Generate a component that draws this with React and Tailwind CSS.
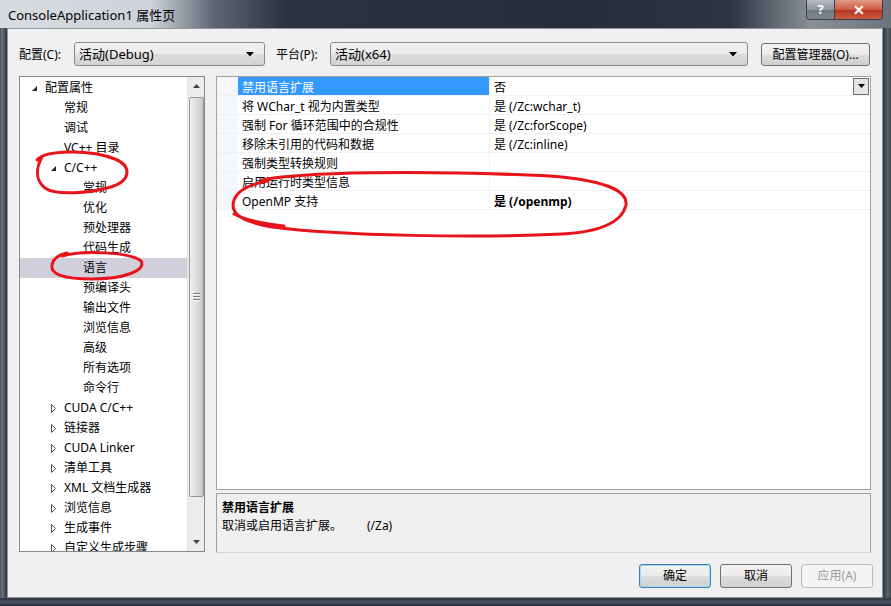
const font = "font-['Segoe_UI','Noto_Sans','Noto_Sans_CJK_SC',sans-serif]";

const treeItems = [
  { t: "配置属性", lvl: 0, arrow: "open" },
  { t: "常规", lvl: 1 },
  { t: "调试", lvl: 1 },
  { t: "VC++ 目录", lvl: 1 },
  { t: "C/C++", lvl: 1, arrow: "open" },
  { t: "常规", lvl: 2 },
  { t: "优化", lvl: 2 },
  { t: "预处理器", lvl: 2 },
  { t: "代码生成", lvl: 2 },
  { t: "语言", lvl: 2, sel: true },
  { t: "预编译头", lvl: 2 },
  { t: "输出文件", lvl: 2 },
  { t: "浏览信息", lvl: 2 },
  { t: "高级", lvl: 2 },
  { t: "所有选项", lvl: 2 },
  { t: "命令行", lvl: 2 },
  { t: "CUDA C/C++", lvl: 1, arrow: "closed" },
  { t: "链接器", lvl: 1, arrow: "closed" },
  { t: "CUDA Linker", lvl: 1, arrow: "closed" },
  { t: "清单工具", lvl: 1, arrow: "closed" },
  { t: "XML 文档生成器", lvl: 1, arrow: "closed" },
  { t: "浏览信息", lvl: 1, arrow: "closed" },
  { t: "生成事件", lvl: 1, arrow: "closed" },
  { t: "自定义生成步骤", lvl: 1, arrow: "closed" },
];

const props = [
  { name: "禁用语言扩展", value: "否", sel: true },
  { name: "将 WChar_t 视为内置类型", value: "是 (/Zc:wchar_t)" },
  { name: "强制 For 循环范围中的合规性", value: "是 (/Zc:forScope)" },
  { name: "移除未引用的代码和数据", value: "是 (/Zc:inline)" },
  { name: "强制类型转换规则", value: "" },
  { name: "启用运行时类型信息", value: "" },
  { name: "OpenMP 支持", value: "是 (/openmp)", bold: true },
];

function DownTri() {
  return (
    <svg width="8" height="5" viewBox="0 0 8 5">
      <path d="M0 0 H8 L4 4.5 Z" fill="#000" />
    </svg>
  );
}

function TreeArrow({ kind }) {
  if (kind === "open") {
    return (
      <svg width="7" height="7" viewBox="0 0 7 7">
        <path d="M6 1 V6 H1 Z" fill="#262626" />
      </svg>
    );
  }
  return (
    <svg width="7" height="9" viewBox="0 0 7 9">
      <path d="M1.5 0.5 L5.5 4.5 L1.5 8.5 Z" fill="#fff" stroke="#555" strokeWidth="1" />
    </svg>
  );
}

function Combo({ text, width }) {
  return (
    <div
      className={`${width} h-[24px] flex items-center justify-between pl-[4px] pr-[10px] pt-[1px] rounded-[3px] border border-[#8a8a8a] bg-[linear-gradient(#f3f3f3,#ebebeb_50%,#dddddd_51%,#d3d3d3)]`}
    >
      <span className="text-[13px] text-black">{text}</span>
      <DownTri />
    </div>
  );
}

function Button({ children, variant }) {
  const styles = {
    default: "border-[#3c7fb1] shadow-[inset_0_0_0_1px_#9fdcf7] text-black",
    normal: "border-[#707070] text-black",
    disabled: "border-[#b8bcc0] text-[#9a9a9a]",
  };
  const bg =
    variant === "disabled"
      ? "bg-[#f4f4f4]"
      : "bg-[linear-gradient(#f2f2f2,#ebebeb_50%,#dddddd_51%,#cfcfcf)]";
  return (
    <div
      className={`w-[72px] h-[24px] flex items-center justify-center rounded-[3px] border text-[12px] ${bg} ${styles[variant]}`}
    >
      {children}
    </div>
  );
}

function Tree() {
  return (
    <div className="w-[186px] h-[476px] border border-[#828790] bg-white flex overflow-hidden">
      <div className="flex-1 pt-[1px] overflow-hidden">
        {treeItems.map((it, i) => (
          <div
            key={i}
            className={`h-[20px] flex items-center ${it.sel ? "bg-[#cfd0dc]" : ""}`}
          >
            <div className="flex items-center" style={{ paddingLeft: 11 + it.lvl * 19 }}>
              <div className="w-[14px] flex items-center">
                {it.arrow && <TreeArrow kind={it.arrow} />}
              </div>
              <span className="text-[12px] text-black leading-none whitespace-nowrap">
                {it.t}
              </span>
            </div>
          </div>
        ))}
      </div>
      <div className="w-[17px] h-full bg-[#ececec] border-l border-[#e2e2e2] flex flex-col items-center">
        <div className="h-[18px] w-full flex items-center justify-center">
          <svg width="7" height="4" viewBox="0 0 7 4">
            <path d="M0 4 L3.5 0 L7 4 Z" fill="#404040" />
          </svg>
        </div>
        <div className="mt-[2px] w-[15px] h-[400px] rounded-[2px] border border-[#979797] bg-[linear-gradient(90deg,#f1f1f1,#dadada_55%,#c8c8c8)] flex items-center justify-center">
          <div className="flex flex-col gap-[1px]">
            <div className="w-[7px] h-[2px] bg-[#7a7a7a] border-b border-white" />
            <div className="w-[7px] h-[2px] bg-[#7a7a7a] border-b border-white" />
            <div className="w-[7px] h-[2px] bg-[#7a7a7a] border-b border-white" />
          </div>
        </div>
        <div className="flex-1" />
        <div className="h-[18px] w-full flex items-center justify-center">
          <svg width="7" height="4" viewBox="0 0 7 4">
            <path d="M0 0 H7 L3.5 4 Z" fill="#404040" />
          </svg>
        </div>
      </div>
    </div>
  );
}

function Grid() {
  return (
    <div className="h-[414px] border border-[#a0a0a0] bg-white">
      {props.map((p, i) => (
        <div key={i} className="h-[19px] flex border-b border-[#f0f0f0]">
          <div className="w-[21px] bg-[#f4f7fc]" />
          <div
            className={`w-[252px] flex items-center pl-[4px] pt-[3px] border-r border-[#f0f0f0] text-[12px] whitespace-nowrap ${
              p.sel ? "bg-[#3399ff] text-white" : "text-black"
            }`}
          >
            {p.name}
          </div>
          <div className="flex-1 flex items-center justify-between pl-[4px] text-[12px] text-black">
            <span className={`pt-[3px] ${p.bold ? "font-bold" : ""}`}>{p.value}</span>
            {p.sel && (
              <div className="w-[16px] h-[17px] mr-[1px] border border-[#707070] bg-[#e4e4e4] flex items-center justify-center">
                <svg width="7" height="4" viewBox="0 0 7 4">
                  <path d="M0 0 H7 L3.5 4 Z" fill="#000" />
                </svg>
              </div>
            )}
          </div>
        </div>
      ))}
    </div>
  );
}

function Marks() {
  return (
    <svg
      className="absolute inset-0 pointer-events-none"
      width="891"
      height="606"
      viewBox="0 0 891 606"
    >
      <g fill="none" stroke="#e8141c" strokeWidth="3" strokeLinecap="round">
        <path d="M37 160 C45 150 90 149 115 159 C132 166 131 181 111 187 C90 193 56 196 45 188 C35 180 36 168 42 157" />
        <path d="M62 256 C82 250 130 252 141 261 C147 271 122 279 92 279 C63 279 50 274 52 265 C53 259 58 255 67 253" />
        <path d="M262 180 C300 172 420 170 550 176 C600 180 628 189 626 205 C622 222 600 232 562 234 C480 238 340 236 272 227 C243 222 229 214 234 200 C238 190 250 184 268 181" />
        <path d="M234 214 C248 221 265 224 284 226" />
      </g>
    </svg>
  );
}

export default function App() {
  return (
    <div className={`relative w-[891px] h-[606px] overflow-hidden flex flex-col bg-[#2f3845] ${font}`}>
      {/* title bar */}
      <div className="h-[28px] flex items-start bg-[linear-gradient(90deg,#d7dce1_0%,#cdd3d9_17%,#5d6672_24%,#2a3340_32%,#252e3a_65%,#2c3542_82%,#8a9098_91%,#6c737d_100%)]">
        <span className="mt-[6px] ml-[8px] text-[13px] text-black">ConsoleApplication1 属性页</span>
        <div className="flex-1" />
        <div className="mr-[8px] flex h-[20px] rounded-b-[4px] border border-t-0 border-[#3a3f48] overflow-hidden">
          <div className="w-[28px] flex items-center justify-center bg-[linear-gradient(#b7bcc3,#8d949c_50%,#6f7780_51%,#7e858e)] border-r border-[#3a3f48] text-white font-bold text-[13px]">
            ?
          </div>
          <div className="w-[47px] flex items-center justify-center bg-[linear-gradient(#e29a88,#cc5a44_50%,#b6321c_51%,#c85b3e)] text-white font-bold text-[14px]">
            ✕
          </div>
        </div>
      </div>

      <div className="flex-1 flex">
        <div className="w-[7px] bg-[linear-gradient(90deg,#4a5360,#6a7380_30%,#2b333e)]" />
        {/* client area */}
        <div className="flex-1 bg-[#f0f0f0] border border-[#8e98a3] flex flex-col pt-[13px] pl-[11px] pr-[11px]">
          <div className="h-[24px] flex items-center">
            <span className="w-[55px] pt-[2px] text-[12px] text-black">配置(C):</span>
            <Combo text="活动(Debug)" width="w-[191px]" />
            <span className="ml-[11px] w-[54px] pt-[2px] text-[12px] text-black">平台(P):</span>
            <Combo text="活动(x64)" width="w-[418px]" />
            <div className="ml-[13px] w-[109px] h-[23px] pt-[1px] rounded-[3px] border border-[#707070] bg-[linear-gradient(#f2f2f2,#ebebeb_50%,#dddddd_51%,#cfcfcf)] flex items-center justify-center text-[12px] text-black">
              配置管理器(O)...
            </div>
          </div>

          <div className="mt-[10px] flex gap-[11px]">
            <Tree />
            <div className="w-[655px] flex flex-col">
              <Grid />
              <div className="mt-[3px] h-[60px] border border-[#a0a0a0] border-b-[#d8d8d8] bg-[#f0f0f0] px-[5px] pt-[5px] text-[12px] text-black leading-[18px]">
                <div className="font-bold">禁用语言扩展</div>
                <div className="whitespace-pre">取消或启用语言扩展。        (/Za)</div>
              </div>
            </div>
          </div>

          <div className="mt-[11px] flex justify-end gap-[9px] -mr-[2px]">
            <Button variant="default">确定</Button>
            <Button variant="normal">取消</Button>
            <Button variant="disabled">应用(A)</Button>
          </div>
        </div>
        <div className="w-[8px] bg-[linear-gradient(90deg,#2b333e,#5a636f_60%,#3a424d)]" />
      </div>
      <div className="h-[8px] bg-[linear-gradient(#2b333e,#4d5663_50%,#222a34)]" />
      <Marks />
    </div>
  );
}
